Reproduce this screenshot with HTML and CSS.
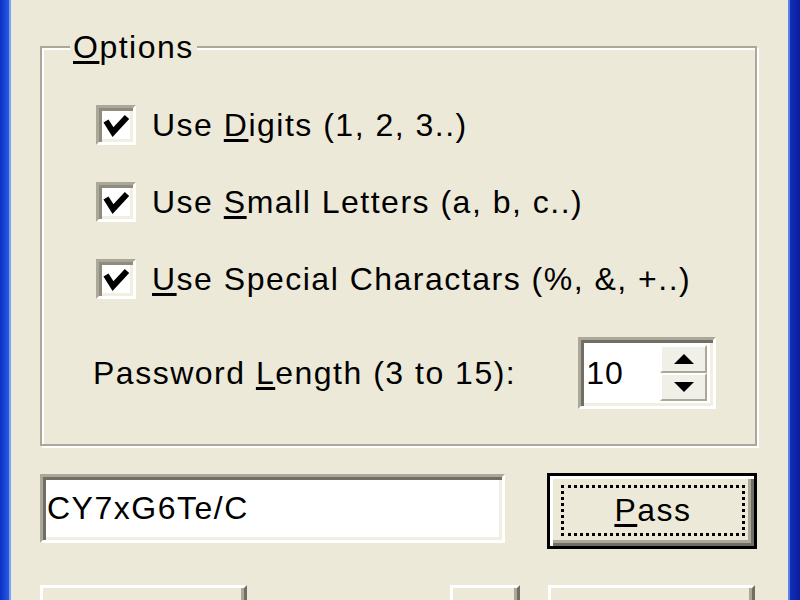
FILE: index.html
```html
<!DOCTYPE html>
<html>
<head>
<meta charset="utf-8">
<link rel="stylesheet" href="styles.css">
</head>
<body>
<div class="window">
  <div class="frame frame-left"></div>
  <main class="client">
    <fieldset class="group">
      <legend><u>O</u>ptions</legend>
      <div class="opts">
        <div class="check">
          <span class="box"><svg viewBox="0 0 34 34" width="34" height="34"><polyline points="7,13 14,24 28,9" /></svg></span>
          <span>Use <u>D</u>igits (1, 2, 3..)</span>
        </div>
        <div class="check">
          <span class="box"><svg viewBox="0 0 34 34" width="34" height="34"><polyline points="7,13 14,24 28,9" /></svg></span>
          <span>Use <u>S</u>mall Letters (a, b, c..)</span>
        </div>
        <div class="check">
          <span class="box"><svg viewBox="0 0 34 34" width="34" height="34"><polyline points="7,13 14,24 28,9" /></svg></span>
          <span><u>U</u>se Special Charactars (%, &amp;, +..)</span>
        </div>
        <div class="len-row">
          <span class="len-label">Password <u>L</u>ength (3 to 15):</span>
          <div class="spin">
            <span class="spin-val">10</span>
            <div class="spin-btns">
              <span class="spin-btn"><svg viewBox="0 0 22 12" width="22" height="12"><polygon points="11,1 21,11 1,11" /></svg></span>
              <span class="spin-btn"><svg viewBox="0 0 22 12" width="22" height="12"><polygon points="1,1 21,1 11,11" /></svg></span>
            </div>
          </div>
        </div>
      </div>
    </fieldset>
    <div class="result-row">
      <div class="field">CY7xG6Te/C</div>
      <button class="btn btn-default"><span class="focus"><u>P</u>ass</span></button>
    </div>
    <div class="bottom-row">
      <button class="btn b1"></button>
      <button class="btn b2"></button>
      <button class="btn b3"></button>
    </div>
  </main>
  <div class="frame frame-right"></div>
</div>
</body>
</html>
```
FILE: styles.css
```css
html, body {
  margin: 0;
  padding: 0;
  background: #ECE9D8;
}
.window {
  display: flex;
  width: 800px;
  height: 600px;
  overflow: hidden;
  font-family: "Liberation Sans", Arial, sans-serif;
  font-size: 32px;
  letter-spacing: 1.5px;
  color: #000;
}
.frame-left {
  width: 9px;
  background: linear-gradient(to right, #0a2fc4, #2a5ae0);
  border-right: 2px solid #7da2ee;
}
.frame-right {
  width: 10px;
  background: linear-gradient(to right, #1030b8, #0a1c9a);
  border-left: 2px solid #5a82e6;
}
.client {
  flex: 1;
  padding: 29px 31px 0 29px;
  display: flex;
  flex-direction: column;
}
u {
  text-decoration-thickness: 3px;
  text-underline-offset: 3px;
}
.group {
  margin: 0;
  padding: 0;
  border: 2px solid #ACA899;
  box-shadow: inset 2px 2px 0 #fff, 2px 2px 0 #fff;
}
.group legend {
  margin-left: 28px;
  padding: 0 3px;
  line-height: 36px;
  background: #ECE9D8;
}
.opts {
  padding: 40px 0 35px 54px;
  display: flex;
  flex-direction: column;
  gap: 37px;
}
.check {
  display: flex;
  align-items: center;
  gap: 16px;
  height: 40px;
}
.box {
  width: 40px;
  height: 40px;
  box-sizing: border-box;
  background: #fff;
  border: 3px solid;
  border-color: #ACA899 #fff #fff #ACA899;
  box-shadow: inset 3px 3px 0 #8f8c7e, inset -3px -3px 0 #F1EFE2;
  display: flex;
}
.box svg polyline {
  fill: none;
  stroke: #000;
  stroke-width: 6;
}
.len-row {
  display: flex;
  align-items: center;
  gap: 62px;
  height: 72px;
  margin-left: -3px;
  margin-top: 1px;
}
.spin {
  width: 138px;
  height: 72px;
  box-sizing: border-box;
  background: #fff;
  border: 3px solid;
  border-color: #ACA899 #fff #fff #ACA899;
  box-shadow: inset 3px 3px 0 #716F64, inset -3px -3px 0 #F1EFE2;
  display: flex;
  align-items: center;
  justify-content: space-between;
  padding: 5px 6px 5px 5px;
}
.spin-val {
  letter-spacing: 1px;
}
.spin-btns {
  display: flex;
  flex-direction: column;
  width: 47px;
  height: 56px;
}
.spin-btn {
  flex: 1;
  box-sizing: border-box;
  background: #F0EFE8;
  border: 2px solid;
  border-color: #fff #ACA899 #ACA899 #fff;
  display: flex;
  align-items: center;
  justify-content: center;
}
.spin-btn svg polygon {
  fill: #000;
}
.result-row {
  display: flex;
  align-items: flex-start;
  margin-top: 27px;
}
.field {
  width: 465px;
  height: 69px;
  margin-top: 1px;
  box-sizing: border-box;
  background: #fff;
  border: 3px solid;
  border-color: #ACA899 #fff #fff #ACA899;
  box-shadow: inset 3px 3px 0 #716F64, inset -3px -3px 0 #F1EFE2;
  padding: 0 4px;
  display: flex;
  align-items: center;
}
.btn {
  box-sizing: border-box;
  background: #ECE9D8;
  border: 3px solid;
  border-color: #fff #716F64 #716F64 #fff;
  box-shadow: inset -3px -3px 0 #ACA899;
  font: inherit;
  letter-spacing: inherit;
  color: #000;
  padding: 0;
}
.btn-default {
  width: 210px;
  height: 76px;
  margin-left: 42px;
  border: 3px solid #000;
  box-shadow: inset 3px 3px 0 #fff, inset -3px -3px 0 #716F64, inset -6px -6px 0 #ACA899;
  display: flex;
  padding: 9px 9px 10px 11px;
}
.focus {
  flex: 1;
  border: 3px dotted #000;
  display: flex;
  align-items: center;
  justify-content: center;
}
.bottom-row {
  display: flex;
  margin-top: 36px;
}
.bottom-row .btn {
  height: 40px;
}
.b1 { width: 207px; }
.b2 { width: 70px; margin-left: 203px; }
.b3 { width: 207px; margin-left: 28px; }
```
